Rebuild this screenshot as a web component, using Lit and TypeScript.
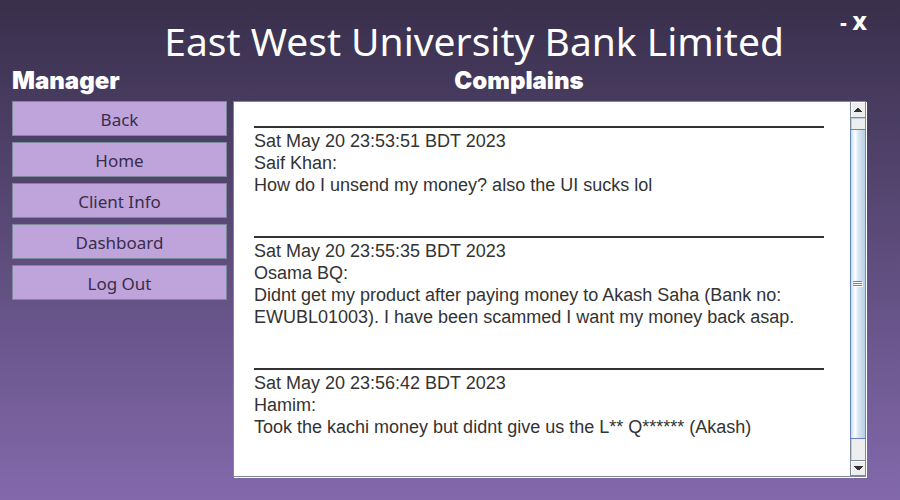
import { LitElement, html, css } from "lit";
import { customElement, state } from "lit/decorators.js";

interface Complaint {
  date: string;
  name: string;
  message: string;
}

@customElement("bank-menu")
class BankMenu extends LitElement {
  static styles = css`
    .menu {
      display: flex;
      flex-direction: column;
      gap: 6px;
    }
    .item {
      height: 35px;
      padding: 2px 0 0;
      border: 1px solid #7a8a99;
      background: #bfa4db;
      color: #382d4b;
      font: 17px/22px "Noto Sans", "Open Sans", sans-serif;
      text-align: center;
    }
  `;
  private items = ["Back", "Home", "Client Info", "Dashboard", "Log Out"];
  render() {
    return html`<nav class="menu">
      ${this.items.map((i) => html`<button class="item" type="button">${i}</button>`)}
    </nav>`;
  }
}

@customElement("metal-scrollbar")
class MetalScrollbar extends LitElement {
  static styles = css`
    :host {
      display: flex;
      flex-direction: column;
      box-sizing: border-box;
      width: 15px;
      border-left: 1px solid #7a8a99;
      background: #eeeeee;
    }
    .step {
      display: flex;
      align-items: center;
      justify-content: center;
      height: 16px;
      padding: 0;
      border: 0;
      border-bottom: 1px solid #7a8a99;
      background: #eeeeee;
      box-shadow: inset 1px 1px 0 #ffffff;
    }
    .step.down {
      border-top: 1px solid #7a8a99;
    }
    .track {
      flex: 1;
      display: flex;
      flex-direction: column;
      padding: 11px 0 21px;
      box-shadow: inset 1px 1px 0 #b8cfe5;
    }
    .thumb {
      flex: 1;
      display: flex;
      align-items: center;
      justify-content: center;
      margin-left: -1px;
      border: 1px solid #6382bf;
      border-right: 0;
      background: linear-gradient(90deg, #c8ddf2, #ffffff 30%, #dce8f3 50%, #b8cfe5);
    }
    svg {
      display: block;
    }
  `;
  render() {
    return html`
      <button class="step" type="button" aria-label="Scroll up">
        <svg width="8" height="4" shape-rendering="crispEdges"><path d="M3 0h2v1h1v1h1v1h1v1H0V3h1V2h1V1h1z" fill="#333" /></svg>
      </button>
      <div class="track">
        <div class="thumb">
          <svg width="10" height="6" shape-rendering="crispEdges">
            <path d="M1 1h9v1H1zM1 3h9v1H1zM1 5h9v1H1z" fill="#fff" />
            <path d="M0 0h9v1H0zM0 2h9v1H0zM0 4h9v1H0z" fill="#6382bf" />
          </svg>
        </div>
      </div>
      <button class="step down" type="button" aria-label="Scroll down">
        <svg width="9" height="4" shape-rendering="crispEdges"><path d="M0 0h9v1H8v1H7v1H6v1H3V3H2V2H1V1H0z" fill="#333" /></svg>
      </button>
    `;
  }
}

@customElement("complaint-list")
class ComplaintList extends LitElement {
  static styles = css`
    :host {
      display: flex;
      box-sizing: border-box;
      border: 1px solid #7a8a99;
      background: #ffffff;
      box-shadow: 1px 1px 0 #ffffff;
    }
    .list {
      flex: 1;
      display: flex;
      flex-direction: column;
      gap: 40px;
      padding: 24px 26px 0 20px;
      color: #333333;
      font: 18px/22px "Liberation Sans", Arial, sans-serif;
    }
    .entry {
      border-top: 2px solid #333333;
      padding-top: 2px;
    }
    p {
      margin: 0;
    }
  `;
  @state() private complaints: Complaint[] = [
    { date: "Sat May 20 23:53:51 BDT 2023", name: "Saif Khan", message: "How do I unsend my money? also the UI sucks lol" },
    {
      date: "Sat May 20 23:55:35 BDT 2023",
      name: "Osama BQ",
      message: "Didnt get my product after paying money to Akash Saha (Bank no: EWUBL01003). I have been scammed I want my money back asap.",
    },
    { date: "Sat May 20 23:56:42 BDT 2023", name: "Hamim", message: "Took the kachi money but didnt give us the L** Q****** (Akash)" },
  ];
  render() {
    return html`
      <div class="list">
        ${this.complaints.map(
          (c) => html`<article class="entry">
            <p>${c.date}</p>
            <p>${c.name}:</p>
            <p>${c.message}</p>
          </article>`
        )}
      </div>
      <metal-scrollbar></metal-scrollbar>
    `;
  }
}

@customElement("app-root")
class AppRoot extends LitElement {
  static styles = css`
    :host {
      display: flex;
      flex-direction: column;
      box-sizing: border-box;
      min-height: 100vh;
      padding: 0 33px 23px 12px;
      background: linear-gradient(#382f4b, #8369ac);
      color: #ffffff;
    }
    .top {
      display: flex;
      height: 66px;
    }
    h1 {
      flex: 1;
      margin: 0;
      padding: 19px 0 0 96px;
      font: 400 39px/44px "Noto Sans", "Open Sans", sans-serif;
      text-align: center;
    }
    .controls {
      display: flex;
      align-items: flex-start;
      gap: 6px;
      padding-top: 11px;
    }
    .control {
      padding: 0;
      border: 0;
      background: none;
      color: inherit;
      font: 800 20px/24px "Open Sans", "Noto Sans", sans-serif;
    }
    .columns {
      flex: 1;
      display: grid;
      grid-template-columns: 215px 1fr;
      grid-template-rows: 35px 1fr;
      column-gap: 6px;
    }
    h2 {
      margin: 0;
      font: 900 24px/30px Inter, "Open Sans", sans-serif;
    }
    .centered {
      padding-right: 62px;
      text-align: center;
    }
    complaint-list {
      margin-right: 1px;
    }
  `;
  render() {
    return html`
      <header class="top">
        <h1>East West University Bank Limited</h1>
        <div class="controls">
          <button class="control" type="button" aria-label="Minimize">-</button>
          <button class="control" type="button" aria-label="Close">X</button>
        </div>
      </header>
      <main class="columns">
        <h2>Manager</h2>
        <h2 class="centered">Complains</h2>
        <bank-menu></bank-menu>
        <complaint-list></complaint-list>
      </main>
    `;
  }
}
